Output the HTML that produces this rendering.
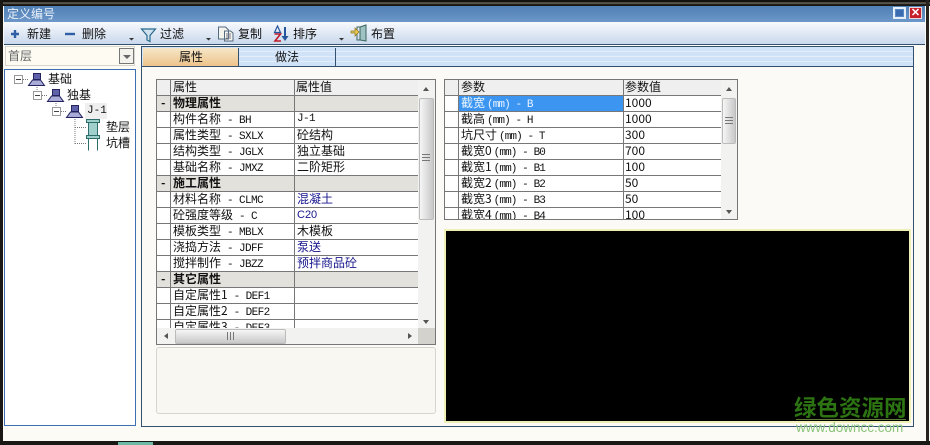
<!DOCTYPE html>
<html><head><meta charset="utf-8">
<style>
html,body{margin:0;padding:0;width:930px;height:445px;overflow:hidden;background:#fdfbf6}
body{position:relative;font:12px/14px "WenQuanYi Zen Hei","Noto Sans CJK SC",sans-serif;color:#111}
div,span,svg{position:absolute;box-sizing:border-box;white-space:nowrap}
.t{height:14px;line-height:14px}
.m{font-family:"Liberation Mono","WenQuanYi Zen Hei",monospace;position:static;font-size:11px;letter-spacing:-.6px;white-space:pre}
.n{margin-left:2px;letter-spacing:-.9px}
.r{left:0;height:16px;border-bottom:1px solid #777}
.g{background:#e3e1db;font-weight:bold}
.b{color:#16168c}
.lbl{left:16px;top:0}
.val{left:140px;top:0}
.val2{left:180px;top:0}
</style></head><body>
<!-- window frame -->
<div style="left:0;top:0;width:930px;height:6px;background:linear-gradient(#14120f 0,#14120f 2px,#8a857a 3px,#26231e 4px,#14120f 6px)"></div>
<div style="left:0;top:0;width:3px;height:445px;background:#1a1815"></div>
<div style="left:926px;top:0;width:3px;height:445px;background:#26221e"></div>
<div style="left:0;top:441px;width:930px;height:4px;background:#1a1815"></div>
<div style="left:118px;top:442px;width:35px;height:3px;background:#6fb8a6"></div>
<!-- title -->
<div style="left:4px;top:6px;width:921px;height:16px;background:linear-gradient(#4f7fb5,#6d97c9)"></div>
<div class="t" style="left:7px;top:7px;color:#eaf2fb;font-size:12px">定义编号</div>
<div style="left:893px;top:7px;width:13px;height:12px;background:#5a88c4;border:2px solid #e6eef8"><div style="left:1px;top:1px;width:7px;height:6px;background:#3b6cb0"></div></div>
<div style="left:909px;top:7px;width:13px;height:12px;background:#c8202a;border:1px solid #ecd8d8;color:#fff;font:bold 11px/10px 'Liberation Sans',sans-serif;text-align:center">✕</div>
<!-- toolbar -->
<div style="left:4px;top:22px;width:921px;height:23px;background:linear-gradient(#f8fafd,#c9d8ec);border-bottom:1px solid #33506f"></div>
<svg style="left:0;top:22px" width="420" height="24">
<path d="M15 8v8M11 12h8" stroke="#2f5fa5" stroke-width="2.400" fill="none"/>
<path d="M65 12h10" stroke="#2f5fa5" stroke-width="2.400" fill="none"/>
<path d="M129 16h5l-2.500 2.500z M206 16h5l-2.500 2.500z M339 16h5l-2.500 2.500z" fill="#333"/>
<path d="M141.500 7h14l-5.500 6.500v6l-3-1.500v-4.500z" fill="#cfe2ee" stroke="#2b6a8c" stroke-width="1.200"/>
<path d="M218.500 5h7l3 3v9h-10zM224.500 9h6l2.500 2v8h-8.500z" fill="#f4f4ee" stroke="#556a80"/>
<path d="M226 12h5M226 14h5M226 16h5" stroke="#778" fill="none"/>
<path d="M274.500 12h6l-5.500 7h6" fill="none" stroke="#c01c2c" stroke-width="1.600"/>
<path d="M277.500 4l3 6.500h-6z" fill="none" stroke="#25569a" stroke-width="1.200"/>
<path d="M285 5v12" stroke="#25569a" stroke-width="2"/><path d="M281.500 14h7l-3.500 5z" fill="#25569a"/>
<path d="M360 5l6-2v16l-6-1z" fill="#9fc2c2" stroke="#3c6660"/><path d="M360 5h-3v13h3" fill="none" stroke="#3c6660"/>
<path d="M351 9h4v-3l4 4-4 4v-3h-4z" fill="#e8c94c" stroke="#8d7420" stroke-width=".7"/>
</svg>
<div class="t" style="left:27px;top:27px">新建</div>
<div class="t" style="left:82px;top:27px">删除</div>
<div class="t" style="left:160px;top:27px">过滤</div>
<div class="t" style="left:238px;top:27px">复制</div>
<div class="t" style="left:293px;top:27px">排序</div>
<div class="t" style="left:371px;top:27px">布置</div>
<!-- combo -->
<div style="left:5px;top:46px;width:130px;height:20px;background:#fdfbf2;border:1px solid #d8d6cc"></div>
<div class="t" style="left:8px;top:49px;color:#666">首层</div>
<div style="left:119px;top:48px;width:15px;height:16px;border:1px solid #777;background:#f3f2ec"></div>
<div style="left:123px;top:55px;width:0;height:0;border:4px solid transparent;border-top:4px solid #666"></div>
<!-- tree -->
<div style="left:4px;top:69px;width:132px;height:357px;background:#fff;border:1px solid #3d70b2"></div>
<svg style="left:0;top:65px" width="140" height="100">
<path d="M23 14.500h5M37 20v7M42 30.500h5M56 36v7M61 46.500h5M75 54v26M75 62.500h11M75 78.500h11" stroke="#777" stroke-dasharray="1 1" fill="none"/>
<g fill="#fff" stroke="#999"><rect x="14.500" y="10.500" width="8" height="8"/><rect x="33.500" y="26.500" width="8" height="8"/><rect x="52.500" y="42.500" width="8" height="8"/></g>
<path d="M16 14.500h5M35 30.500h5M54 46.500h5" stroke="#444"/>
<g fill="#5f62a8" stroke="#22235f"><path d="M33.500 8.500h7v6h-7z"/><path d="M32.500 15h8l4 5.500H28.500z" fill="#a9abd6"/></g>
<g fill="#5f62a8" stroke="#22235f" transform="translate(19 16)"><path d="M33.500 8.500h7v6h-7z"/><path d="M32.500 15h8l4 5.500H28.500z" fill="#a9abd6"/></g>
<g fill="#5f62a8" stroke="#22235f" transform="translate(38 32)"><path d="M33.500 8.500h7v6h-7z"/><path d="M32.500 15h8l4 5.500H28.500z" fill="#a9abd6"/></g>
<g fill="#9fd0cc" stroke="#2c6d6a"><rect x="86.500" y="54.500" width="13" height="3"/><rect x="88.500" y="57.500" width="9" height="13"/><rect x="86.500" y="70.500" width="13" height="3"/><path d="M88.500 73.500v12M97.500 73.500v12"/></g>
</svg>
<div class="t" style="left:48px;top:72px">基础</div>
<div class="t" style="left:67px;top:88px">独基</div>
<div style="left:85px;top:103px;width:22px;height:16px;background:#efefef"></div>
<div class="t" style="left:87px;top:104px;font-size:11px;font-family:'Liberation Mono',monospace">J-1</div>
<div class="t" style="left:106px;top:120px">垫层</div>
<div class="t" style="left:106px;top:136px">坑槽</div>
<!-- right panel -->
<div style="left:141px;top:46px;width:773px;height:381px;background:#fbfaf6;border:1px solid #33506f"></div>
<div style="left:142px;top:47px;width:771px;height:20px;border-bottom:1px solid #33506f;background:repeating-linear-gradient(#cfe2f7 0,#cfe2f7 4px,#eaf2fc 4px,#dbe9f9 5px)"></div>
<div style="left:143px;top:48px;width:96px;height:18px;background:linear-gradient(#f6e7c8,#eec38a);border-right:1px solid #33506f"></div>
<div style="left:239px;top:48px;width:97px;height:18px;border-right:1px solid #33506f"></div>
<div class="t" style="left:179px;top:50px">属性</div>
<div class="t" style="left:275px;top:50px">做法</div>
<!-- grid 1 -->
<div style="left:156px;top:79px;width:280px;height:266px;background:#fff;border:1px solid #777;overflow:hidden">
 <div style="left:0;top:0;width:278px;height:16px;background:#efefef;border-bottom:1px solid #777"></div>
 <div class="lbl" style="top:0">属性</div><div class="val" style="top:0;left:139px">属性值</div>
 <div style="left:0;top:16px;width:261px;height:232px;overflow:hidden;background:#fff">
  <div class="r g" style="top:0;width:261px"><div style="left:4px;top:0">-</div><div class="lbl">物理属性</div></div>
  <div class="r" style="top:16px;width:261px"><div class="lbl">构件名称<span class="m"> - BH</span></div><div class="val" style="font-family:'Liberation Mono',monospace;font-size:11px;letter-spacing:-.6px">J-1</div></div>
  <div class="r" style="top:32px;width:261px"><div class="lbl">属性类型<span class="m"> - SXLX</span></div><div class="val">砼结构</div></div>
  <div class="r" style="top:48px;width:261px"><div class="lbl">结构类型<span class="m"> - JGLX</span></div><div class="val">独立基础</div></div>
  <div class="r" style="top:64px;width:261px"><div class="lbl">基础名称<span class="m"> - JMXZ</span></div><div class="val">二阶矩形</div></div>
  <div class="r g" style="top:80px;width:261px"><div style="left:4px;top:0">-</div><div class="lbl">施工属性</div></div>
  <div class="r" style="top:96px;width:261px"><div class="lbl">材料名称<span class="m"> - CLMC</span></div><div class="val b">混凝土</div></div>
  <div class="r" style="top:112px;width:261px"><div class="lbl">砼强度等级<span class="m"> - C</span></div><div class="val b" style="font-family:'Liberation Sans',sans-serif;font-size:11px">C20</div></div>
  <div class="r" style="top:128px;width:261px"><div class="lbl">模板类型<span class="m"> - MBLX</span></div><div class="val">木模板</div></div>
  <div class="r" style="top:144px;width:261px"><div class="lbl">浇捣方法<span class="m"> - JDFF</span></div><div class="val b">泵送</div></div>
  <div class="r" style="top:160px;width:261px"><div class="lbl">搅拌制作<span class="m"> - JBZZ</span></div><div class="val b">预拌商品砼</div></div>
  <div class="r g" style="top:176px;width:261px"><div style="left:4px;top:0">-</div><div class="lbl">其它属性</div></div>
  <div class="r" style="top:192px;width:261px"><div class="lbl">自定属性1<span class="m"> - DEF1</span></div></div>
  <div class="r" style="top:208px;width:261px"><div class="lbl">自定属性2<span class="m"> - DEF2</span></div></div>
  <div class="r" style="top:224px;width:261px"><div class="lbl">自定属性3<span class="m"> - DEF3</span></div></div>
 </div>
 <div style="left:13px;top:0;width:1px;height:248px;background:#777"></div>
 <div style="left:137px;top:0;width:1px;height:248px;background:#777"></div>
 <!-- vscroll -->
 <div style="left:261px;top:0;width:17px;height:248px;background:#f2f2f0"></div>
 <div style="left:266px;top:7px;width:0;height:0;border:3px solid transparent;border-bottom:4px solid #555;border-top:0"></div>
 <div style="left:262px;top:18px;width:15px;height:122px;background:linear-gradient(90deg,#f6f6f6,#c8c8c8);border:1px solid #bbb;border-radius:2px"></div>
 <div style="left:265px;top:74px;width:8px;height:7px;background:repeating-linear-gradient(#777 0,#777 1px,transparent 1px,transparent 3px)"></div>
 <div style="left:266px;top:240px;width:0;height:0;border:3px solid transparent;border-top:4px solid #555;border-bottom:0"></div>
 <!-- hscroll -->
 <div style="left:0;top:248px;width:261px;height:16px;background:#f2f2f0"></div>
 <div style="left:261px;top:248px;width:17px;height:16px;background:#d4d2cc"></div>
 <div style="left:7px;top:253px;width:0;height:0;border:3px solid transparent;border-right:4px solid #555;border-left:0"></div>
 <div style="left:251px;top:253px;width:0;height:0;border:3px solid transparent;border-left:4px solid #555;border-right:0"></div>
 <div style="left:18px;top:249px;width:111px;height:15px;background:linear-gradient(#f6f6f6,#c8c8c8);border:1px solid #bbb;border-radius:2px"></div>
 <div style="left:70px;top:252px;width:7px;height:8px;background:repeating-linear-gradient(90deg,#777 0,#777 1px,transparent 1px,transparent 3px)"></div>
</div>
<!-- description box -->
<div style="left:156px;top:347px;width:280px;height:67px;background:#f8f7f2;border:1px solid #d8d6cc;border-radius:3px"></div>
<!-- grid 2 -->
<div style="left:444px;top:79px;width:294px;height:141px;background:#fff;border:1px solid #777;overflow:hidden">
 <div style="left:0;top:0;width:292px;height:16px;background:#efefef;border-bottom:1px solid #777"></div>
 <div class="lbl" style="top:0">参数</div><div class="val2" style="top:0">参数值</div>
 <div style="left:0;top:16px;width:276px;height:123px;overflow:hidden">
  <div style="left:14px;top:0;width:164px;height:16px;background:#3d95f2"></div>
  <div class="r" style="top:0;width:276px;border-color:#777"><div class="lbl" style="color:#e8f4ff">截宽<span class="m n">(mm) - B</span></div><div class="val2">1000</div></div>
  <div class="r" style="top:16px;width:276px"><div class="lbl">截高<span class="m n">(mm) - H</span></div><div class="val2">1000</div></div>
  <div class="r" style="top:32px;width:276px"><div class="lbl">坑尺寸<span class="m n">(mm) - T</span></div><div class="val2">300</div></div>
  <div class="r" style="top:48px;width:276px"><div class="lbl">截宽0<span class="m n">(mm) - B0</span></div><div class="val2">700</div></div>
  <div class="r" style="top:64px;width:276px"><div class="lbl">截宽1<span class="m n">(mm) - B1</span></div><div class="val2">100</div></div>
  <div class="r" style="top:80px;width:276px"><div class="lbl">截宽2<span class="m n">(mm) - B2</span></div><div class="val2">50</div></div>
  <div class="r" style="top:96px;width:276px"><div class="lbl">截宽3<span class="m n">(mm) - B3</span></div><div class="val2">50</div></div>
  <div class="r" style="top:112px;width:276px"><div class="lbl">截宽4<span class="m n">(mm) - B4</span></div><div class="val2">100</div></div>
 </div>
 <div style="left:13px;top:0;width:1px;height:139px;background:#777"></div>
 <div style="left:178px;top:0;width:1px;height:139px;background:#777"></div>
 <div style="left:276px;top:0;width:16px;height:139px;background:#f2f2f0"></div>
 <div style="left:281px;top:7px;width:0;height:0;border:3px solid transparent;border-bottom:4px solid #555;border-top:0"></div>
 <div style="left:277px;top:18px;width:14px;height:46px;background:linear-gradient(90deg,#f6f6f6,#c8c8c8);border:1px solid #bbb;border-radius:2px"></div>
 <div style="left:280px;top:37px;width:8px;height:7px;background:repeating-linear-gradient(#777 0,#777 1px,transparent 1px,transparent 3px)"></div>
 <div style="left:281px;top:130px;width:0;height:0;border:3px solid transparent;border-top:4px solid #555;border-bottom:0"></div>
</div>
<!-- black canvas -->
<div style="left:444px;top:229px;width:467px;height:194px;background:#000;border:2px solid #eef0b4"></div>
<!-- watermark -->
<div style="left:794px;top:394px;color:#2f7a14;font:bold 22.500px/26px 'Noto Sans CJK SC',sans-serif;opacity:.95">绿色资源网</div>
<div style="left:796px;top:419px;width:110px;height:1px;background:#5e7a3a"></div>
<div style="left:796px;top:419px;color:#8cc47c;font:13.500px/17px 'Liberation Sans',sans-serif">www.downcc.com</div>
</body></html>
